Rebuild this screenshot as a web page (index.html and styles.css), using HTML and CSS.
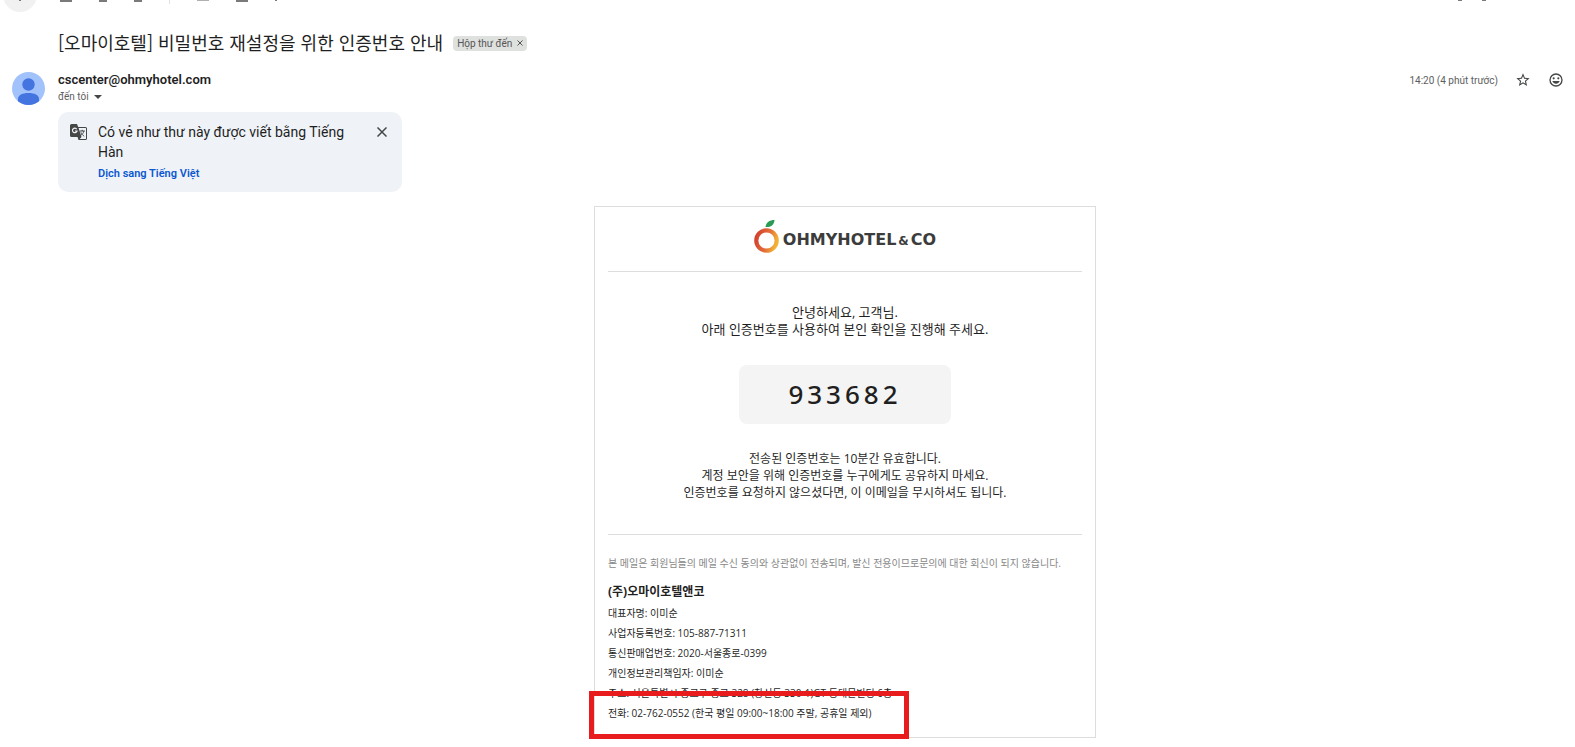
FILE: index.html
```
<!DOCTYPE html>
<html lang="vi">
<head>
  <meta charset="UTF-8" />
  <meta name="viewport" content="width=device-width, initial-scale=1.0" />
  <title>[오마이호텔] 비밀번호 재설정을 위한 인증번호 안내</title>
  <link rel="stylesheet" href="styles.css">
</head>
<body>
  <header class="toolbar">
    <button type="button" class="back" aria-label="Quay lại"><span class="mark dot"></span></button>
    <div class="tools">
      <span class="mark wide"></span>
      <span class="mark"></span>
      <span class="mark"></span>
      <span class="divider"></span>
      <span class="mark wide light"></span>
      <span class="mark wide"></span>
      <span class="mark dot"></span>
    </div>
    <div class="pager">
      <span class="mark small"></span>
      <span class="mark small"></span>
    </div>
  </header>

  <main class="mail">
    <div class="subject">
      <h1 lang="ko">[오마이호텔] 비밀번호 재설정을 위한 인증번호 안내</h1>
      <span class="label">Hộp thư đến <button type="button" aria-label="Xóa nhãn">
        <svg viewBox="0 0 6 6"><path d="M.5.5l5 5M5.500.5l-5 5" stroke="#555" stroke-width="1" /></svg>
      </button></span>
    </div>

    <div class="sender">
      <svg class="avatar" viewBox="0 0 33 33">
        <defs><clipPath id="round"><circle cx="16.5" cy="16.5" r="16.5" /></clipPath></defs>
        <g clip-path="url(#round)">
          <rect width="33" height="33" fill="#a1c2fa" />
          <circle cx="16.5" cy="12.5" r="6.2" fill="#4374e0" />
          <path d="M6 27c0-4 4.500-6 10.500-6s10.500 2 10.500 6v6H6z" fill="#4374e0" />
        </g>
      </svg>
      <div class="from">
        <strong>cscenter@ohmyhotel.com</strong>
        <button type="button" class="to">đến tôi
          <svg viewBox="0 0 8 4"><path d="M0 0h8L4 4z" fill="#444746" /></svg>
        </button>
      </div>
      <div class="meta">
        <time>14:20 (4 phút trước)</time>
        <button type="button" aria-label="Gắn dấu sao">
          <svg viewBox="0 0 24 24"><path fill="#444746" d="M22 9.240l-7.190-.620L12 2 9.190 8.630 2 9.240l5.460 4.730L5.820 21 12 17.270 18.180 21l-1.630-7.030L22 9.240zM12 15.400l-3.760 2.270 1-4.280-3.320-2.880 4.380-.380L12 6.100l1.710 4.040 4.380.380-3.320 2.880 1 4.280L12 15.400z" /></svg>
        </button>
        <button type="button" aria-label="Thêm biểu tượng cảm xúc">
          <svg viewBox="0 0 24 24"><g fill="#444746"><path d="M12 2a10 10 0 1 0 0 20 10 10 0 0 0 0-20zm0 18a8 8 0 1 1 0-16 8 8 0 0 1 0 16z" /><circle cx="8.500" cy="9.500" r="1.600" /><circle cx="15.500" cy="9.500" r="1.600" /><path d="M6.500 13.500h11c-.8 2.400-2.900 4-5.500 4s-4.700-1.600-5.500-4z" /></g></svg>
        </button>
      </div>
    </div>

    <section class="translate">
      <svg class="g-icon" viewBox="0 0 17 17">
        <path d="M1.500 0H7l1.200 3h7.300A1.500 1.500 0 0 1 17 4.500v10a1.500 1.500 0 0 1-1.500 1.500H8.500l-1-3h-6A1.500 1.500 0 0 1 0 11.500v-10A1.500 1.500 0 0 1 1.500 0z" fill="#444746" />
        <path d="M8.600 4H15.500a.5.5 0 0 1 .5.500v10a.5.5 0 0 1-.5.500H9.700l1.800-2z" fill="#eff3f8" />
        <path d="M6.700 5.100A2.300 2.300 0 1 0 7 7H5" fill="none" stroke="#eff3f8" stroke-width="1.200" />
        <path d="M9.800 7h5M12.200 5.800V7M13.900 7c-.3 1.800-1.700 3.500-3.300 4.500M10.900 8.300c.6 1.500 1.900 3 3.300 4" fill="none" stroke="#444746" stroke-width="1" />
      </svg>
      <div class="translate-text">
        <p>Có vẻ như thư này được viết bằng Tiếng Hàn</p>
        <a href="#">Dịch sang Tiếng Việt</a>
      </div>
      <button type="button" class="close" aria-label="Đóng">
        <svg viewBox="0 0 10 10"><path d="M.5.5l9 9M9.500.5l-9 9" stroke="#444746" stroke-width="1.500" /></svg>
      </button>
    </section>

    <div class="content" lang="ko">
      <article class="card">
        <div class="logo">
          <svg class="fruit" viewBox="0 0 25 33">
            <defs>
              <linearGradient id="peel" x1="0" y1="0.200" x2="1" y2="0.500">
                <stop offset="0" stop-color="#d3402f" />
                <stop offset="0.600" stop-color="#e5703a" />
                <stop offset="1" stop-color="#f2b035" />
              </linearGradient>
            </defs>
            <circle cx="12.500" cy="20.500" r="10.200" fill="none" stroke="url(#peel)" stroke-width="4.200" />
            <path d="M11.500 7C12 2.500 15.500 0 20.500 0c-.3 4.500-3 7.500-9 7z" fill="#2a9a55" />
          </svg>
          <div class="name"><span>OHMYHOTEL</span><span class="amp">&amp;</span><span>CO</span></div>
        </div>

        <div class="body">
          <p class="greeting">안녕하세요, 고객님.<br>아래 인증번호를 사용하여 본인 확인을 진행해 주세요.</p>
          <div class="code">933682</div>
          <p class="notice">전송된 인증번호는 10분간 유효합니다.<br>계정 보안을 위해 인증번호를 누구에게도 공유하지 마세요.<br>인증번호를 요청하지 않으셨다면, 이 이메일을 무시하셔도 됩니다.</p>
        </div>

        <footer class="company">
          <p class="disclaimer">본 메일은 회원님들의 메일 수신 동의와 상관없이 전송되며, 발신 전용이므로문의에 대한 회신이 되지 않습니다.</p>
          <h2>(주)오마이호텔앤코</h2>
          <ul>
            <li>대표자명: 이미순</li>
            <li>사업자등록번호: 105-887-71311</li>
            <li>통신판매업번호: 2020-서울종로-0399</li>
            <li>개인정보관리책임자: 이미순</li>
            <li>주소: 서울특별시 종로구 종로 328 (창신동 330-1)GT 동대문빌딩 6층</li>
            <li class="phone">전화: 02-762-0552 (한국 평일 09:00~18:00 주말, 공휴일 제외)</li>
          </ul>
        </footer>
      </article>
    </div>
  </main>
</body>
</html>
```
FILE: styles.css
```
* { margin: 0; padding: 0; box-sizing: border-box; }

body {
  font-family: "Open Sans", "Noto Sans CJK KR", sans-serif;
  background-color: #fff;
  color: #1f1f1f;
}

button {
  border: none;
  background: none;
  font: inherit;
  color: inherit;
  cursor: pointer;
}

svg {
  display: block;
}

/* toolbar, scrolled mostly out of view */
.toolbar {
  display: flex;
  height: 12px;
  padding-left: 3px;
  overflow: hidden;
}

.back {
  width: 34px;
  height: 34px;
  margin-top: -22px;
  padding-top: 22px;
  border-radius: 50%;
  background-color: #f1f1f1;
  display: flex;
  justify-content: center;
}

.tools {
  display: flex;
  gap: 27px;
  margin-left: 23px;
}

.mark {
  width: 8px;
  height: 2px;
  background-color: #7a7a7a;
}

.mark.wide { width: 12px; }
.mark.small { width: 4px; height: 1px; }
.mark.dot { width: 2px; height: 1px; }
.mark.light { height: 1px; background-color: #b0b0b0; }

.divider {
  width: 1px;
  height: 4px;
  background-color: #e3e3e3;
}

.pager {
  display: flex;
  gap: 20px;
  margin-left: auto;
  margin-right: 89px;
}

.subject {
  display: flex;
  align-items: center;
  gap: 10px;
  height: 28px;
  margin: 16px 0 0 58px;
}

.subject h1 {
  font-family: "Noto Sans CJK KR", sans-serif;
  font-size: 18px;
  font-weight: 400;
}

.label {
  display: flex;
  align-items: center;
  gap: 5px;
  height: 15px;
  margin-top: 2px;
  padding: 0 4px;
  border-radius: 4px;
  background-color: #dfe1df;
  color: #555;
  font-family: Roboto, sans-serif;
  font-size: 10px;
  line-height: 15px;
}

.label svg {
  width: 6px;
  height: 6px;
}

.sender {
  display: flex;
  align-items: flex-start;
  padding: 16px 11px 0 12px;
}

.avatar {
  width: 33px;
  height: 33px;
  margin-right: 13px;
}

.from {
  display: flex;
  flex-direction: column;
  align-items: flex-start;
}

.from strong {
  font-family: Roboto, sans-serif;
  font-size: 13px;
  font-weight: 600;
  line-height: 16px;
}

.to {
  display: flex;
  align-items: center;
  gap: 5px;
  color: #5e5e5e;
  font-family: Roboto, sans-serif;
  font-size: 10px;
  line-height: 18px;
}

.to svg {
  width: 8px;
  height: 4px;
}

.meta {
  display: flex;
  align-items: center;
  gap: 17px;
  margin-left: auto;
  color: #5e5e5e;
  font-family: Roboto, sans-serif;
  font-size: 10px;
}

.meta svg {
  width: 16px;
  height: 16px;
}

.translate {
  display: flex;
  align-items: flex-start;
  width: 344px;
  margin: 6px 0 0 58px;
  padding: 10px 10px 9px 12px;
  border-radius: 10px;
  background-color: #eff3f8;
  font-family: Roboto, sans-serif;
}

.g-icon {
  width: 17px;
  height: 17px;
  margin: 2px 11px 0 0;
}

.translate-text {
  flex: 1;
  padding-right: 20px;
}

.translate p {
  font-size: 14px;
  line-height: 20px;
}

.translate a {
  display: block;
  margin-top: 2px;
  color: #0b57d0;
  font-size: 11px;
  font-weight: 600;
  line-height: 19px;
  text-decoration: none;
}

.close {
  padding: 5px;
}

.close svg {
  width: 10px;
  height: 10px;
}

.content {
  display: flex;
  justify-content: center;
  padding: 14px 0 8px 115px;
}

.card {
  width: 502px;
  padding: 0 13px;
  border: 1px solid #ddd;
}

.logo {
  display: flex;
  align-items: center;
  justify-content: center;
  height: 65px;
  padding-bottom: 5px;
  border-bottom: 1px solid #ddd;
  color: #3c3c3c;
}

.fruit {
  width: 25px;
  height: 33px;
  margin-right: 4px;
}

.name {
  padding-top: 6px;
  font-family: "DejaVu Sans", sans-serif;
  font-size: 16px;
  font-weight: 700;
}

.amp {
  margin: 0 2px;
  font-size: 12px;
}

.body {
  padding: 32px 0 33px;
  border-bottom: 1px solid #ddd;
  text-align: center;
}

.greeting {
  font-size: 13px;
  line-height: 17px;
}

.code {
  width: fit-content;
  margin: 27px auto 26px;
  padding: 0 49px;
  border-radius: 8px;
  background-color: #f4f4f4;
  font-family: "Noto Sans", sans-serif;
  font-size: 26px;
  font-weight: 500;
  letter-spacing: 4px;
  line-height: 59px;
}

.notice {
  font-size: 12px;
  line-height: 17px;
}

.company {
  padding: 18px 0 14px;
  font-size: 10px;
  line-height: 20px;
}

.company h2 {
  margin-top: 8px;
  font-size: 12px;
  line-height: 22px;
}

.disclaimer {
  color: #888;
}

.company ul {
  list-style: none;
}

.phone {
  position: relative;
}

/* red frame round the phone line */
.phone::after {
  content: "";
  box-sizing: border-box;
  position: absolute;
  top: -12px;
  left: -19px;
  width: 320px;
  height: 48px;
  border: 5px solid #e81c1c;
}
```
